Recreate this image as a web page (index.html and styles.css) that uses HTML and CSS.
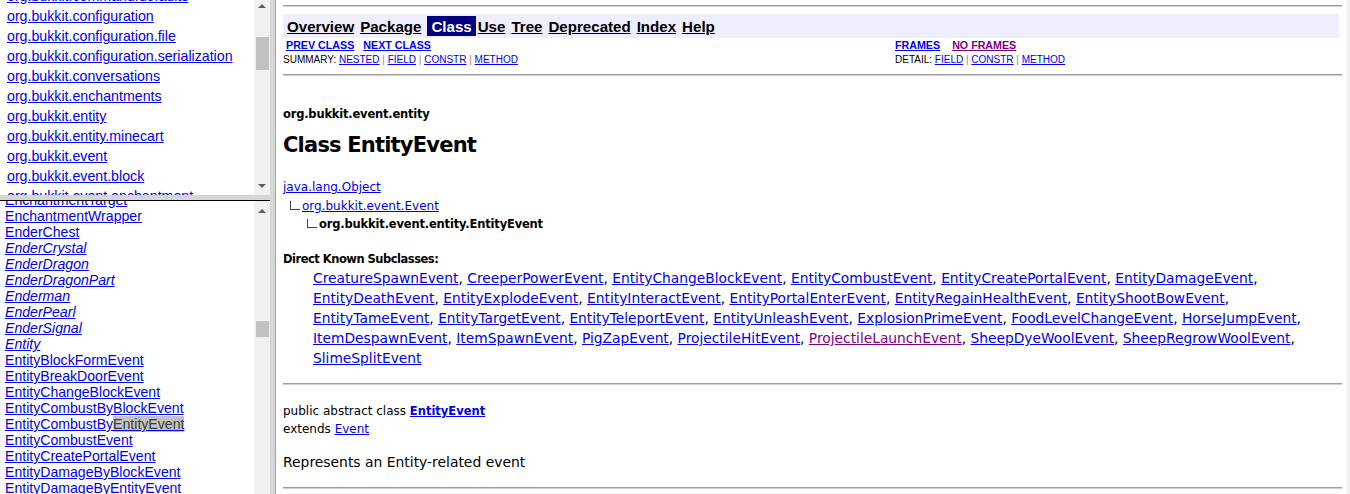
FILE: index.html
```html
<!DOCTYPE html>
<html>
<head>
<meta charset="utf-8">
<title>EntityEvent</title>
<link rel="stylesheet" href="styles.css">
</head>
<body>
<div class="screen">
  <div class="left">
    <div class="frame frame-top">
      <div class="frame-body">
        <ul class="pkg-list">
          <li><a href="#">org.bukkit.command.defaults</a></li>
          <li><a href="#">org.bukkit.configuration</a></li>
          <li><a href="#">org.bukkit.configuration.file</a></li>
          <li><a href="#">org.bukkit.configuration.serialization</a></li>
          <li><a href="#">org.bukkit.conversations</a></li>
          <li><a href="#">org.bukkit.enchantments</a></li>
          <li><a href="#">org.bukkit.entity</a></li>
          <li><a href="#">org.bukkit.entity.minecart</a></li>
          <li><a href="#">org.bukkit.event</a></li>
          <li><a href="#">org.bukkit.event.block</a></li>
          <li><a href="#">org.bukkit.event.enchantment</a></li>
        </ul>
      </div>
      <div class="vscroll vscroll-top">
        <div class="sb-btn sb-up"><span class="tri-up"></span></div>
        <div class="sb-thumb"></div>
        <div class="sb-btn sb-down"><span class="tri-down"></span></div>
      </div>
    </div>
    <div class="hsep"></div>
    <div class="frame frame-bottom">
      <div class="frame-body">
        <ul class="class-list">
          <li><a href="#">EnchantmentTarget</a></li>
          <li><a href="#">EnchantmentWrapper</a></li>
          <li><a href="#">EnderChest</a></li>
          <li><a href="#" class="iface">EnderCrystal</a></li>
          <li><a href="#" class="iface">EnderDragon</a></li>
          <li><a href="#" class="iface">EnderDragonPart</a></li>
          <li><a href="#" class="iface">Enderman</a></li>
          <li><a href="#" class="iface">EnderPearl</a></li>
          <li><a href="#" class="iface">EnderSignal</a></li>
          <li><a href="#" class="iface">Entity</a></li>
          <li><a href="#">EntityBlockFormEvent</a></li>
          <li><a href="#">EntityBreakDoorEvent</a></li>
          <li><a href="#">EntityChangeBlockEvent</a></li>
          <li><a href="#">EntityCombustByBlockEvent</a></li>
          <li><a href="#">EntityCombustBy<span class="hl">EntityEvent</span></a></li>
          <li><a href="#">EntityCombustEvent</a></li>
          <li><a href="#">EntityCreatePortalEvent</a></li>
          <li><a href="#">EntityDamageByBlockEvent</a></li>
          <li><a href="#">EntityDamageByEntityEvent</a></li>
          <li><a href="#">EntityDamageEvent</a></li>
        </ul>
      </div>
      <div class="vscroll vscroll-bottom">
        <div class="sb-btn sb-up2"><span class="tri-up"></span></div>
        <div class="sb-thumb sb-thumb2"></div>
      </div>
    </div>
  </div>
  <div class="vsep"></div>
  <div class="right">
    <div class="rule rule-1"></div>
    <div class="navbar">
      <a href="#" class="nav-link">Overview</a>
      <a href="#" class="nav-link">Package</a>
      <span class="nav-current">Class</span>
      <a href="#" class="nav-link">Use</a>
      <a href="#" class="nav-link">Tree</a>
      <a href="#" class="nav-link">Deprecated</a>
      <a href="#" class="nav-link">Index</a>
      <a href="#" class="nav-link">Help</a>
    </div>
    <div class="subnav">
      <div class="subnav-cell subnav-prevnext"><a href="#">PREV CLASS</a><a href="#" class="gap">NEXT CLASS</a></div>
      <div class="subnav-cell subnav-frames"><a href="#">FRAMES</a><a href="#" class="gap2 visited">NO FRAMES</a></div>
      <div class="subnav-cell subnav-small">SUMMARY:&nbsp;<a href="#">NESTED</a>&nbsp;<span class="pipe">|</span>&nbsp;<a href="#">FIELD</a>&nbsp;<span class="pipe">|</span>&nbsp;<a href="#">CONSTR</a>&nbsp;<span class="pipe">|</span>&nbsp;<a href="#">METHOD</a></div>
      <div class="subnav-cell subnav-small">DETAIL:&nbsp;<a href="#">FIELD</a>&nbsp;<span class="pipe">|</span>&nbsp;<a href="#">CONSTR</a>&nbsp;<span class="pipe">|</span>&nbsp;<a href="#">METHOD</a></div>
    </div>
    <div class="rule rule-2"></div>

    <div class="pkg-label">org.bukkit.event.entity</div>
    <h2 class="class-title">Class EntityEvent</h2>

    <div class="tree">
      <div class="tree-line"><a href="#">java.lang.Object</a></div>
      <div class="tree-line tree-l2"><span class="inherit"></span><a href="#">org.bukkit.event.Event</a></div>
      <div class="tree-line tree-l3"><span class="inherit"></span><b>org.bukkit.event.entity.EntityEvent</b></div>
    </div>

    <dl class="subclasses">
      <dt>Direct Known Subclasses:</dt>
      <dd><a href="#">CreatureSpawnEvent</a>, <a href="#">CreeperPowerEvent</a>, <a href="#">EntityChangeBlockEvent</a>, <a href="#">EntityCombustEvent</a>, <a href="#">EntityCreatePortalEvent</a>, <a href="#">EntityDamageEvent</a>, <a href="#">EntityDeathEvent</a>, <a href="#">EntityExplodeEvent</a>, <a href="#">EntityInteractEvent</a>, <a href="#">EntityPortalEnterEvent</a>, <a href="#">EntityRegainHealthEvent</a>, <a href="#">EntityShootBowEvent</a>, <a href="#">EntityTameEvent</a>, <a href="#">EntityTargetEvent</a>, <a href="#">EntityTeleportEvent</a>, <a href="#">EntityUnleashEvent</a>, <a href="#">ExplosionPrimeEvent</a>, <a href="#">FoodLevelChangeEvent</a>, <a href="#">HorseJumpEvent</a>, <a href="#">ItemDespawnEvent</a>, <a href="#">ItemSpawnEvent</a>, <a href="#">PigZapEvent</a>, <a href="#">ProjectileHitEvent</a>, <a href="#" class="visited">ProjectileLaunchEvent</a>, <a href="#">SheepDyeWoolEvent</a>, <a href="#">SheepRegrowWoolEvent</a>, <a href="#">SlimeSplitEvent</a></dd>
    </dl>

    <div class="rule rule-3"></div>

    <div class="signature">
      <div>public abstract class <a href="#" class="strong-link">EntityEvent</a></div>
      <div>extends <a href="#">Event</a></div>
    </div>

    <p class="description">Represents an Entity-related event</p>

    <div class="rule rule-4"></div>
  </div>
  <div class="rscroll"></div>
</div>
</body>
</html>
```

FILE: styles.css
```css
html, body {
  margin: 0;
  padding: 0;
  background: #ffffff;
}

.screen {
  display: flex;
  width: 1350px;
  height: 494px;
  overflow: hidden;
  background: #ffffff;
}

a {
  color: #0000ee;
  text-decoration: underline;
}

a.visited {
  color: #800080;
}

/* ---------- left frames ---------- */
.left {
  width: 270px;
  flex: none;
  display: flex;
  flex-direction: column;
}

.frame {
  display: flex;
  overflow: hidden;
  background: #ffffff;
}

.frame-top {
  height: 195px;
  flex: none;
}

.frame-bottom {
  flex: 1;
}

.frame-body {
  flex: 1;
  overflow: hidden;
  font-family: "Liberation Sans", Arial, sans-serif;
  font-size: 14.2px;
}

.pkg-list,
.class-list {
  list-style: none;
  margin: 0;
  padding: 0;
  white-space: nowrap;
}

.pkg-list {
  margin-top: -14px;
  padding-left: 7px;
  line-height: 20px;
}

.class-list {
  margin-top: -9px;
  padding-left: 5px;
  line-height: 16px;
  font-size: 14.1px;
}

.iface {
  font-style: italic;
}

.hl {
  background: #c3c3c3;
  color: #3a3a3a;
}

.hsep {
  height: 5px;
  flex: none;
  background: #d6d6d6;
  border-bottom: 1px solid #000000;
}

.vsep {
  width: 5px;
  flex: none;
  background: #d6d6d6;
  border-right: 1px solid #a0a0a0;
}

/* scrollbars */
.vscroll {
  width: 16px;
  flex: none;
  background: #f0f0f0;
  display: flex;
  flex-direction: column;
}

.sb-btn {
  display: flex;
  align-items: center;
  justify-content: center;
  flex: none;
}

.sb-up {
  height: 12px;
}

.sb-up2 {
  height: 19px;
}

.sb-down {
  height: 19px;
  margin-top: auto;
}

.tri-up {
  width: 0;
  height: 0;
  border-left: 4px solid transparent;
  border-right: 4px solid transparent;
  border-bottom: 4px solid #606060;
}

.tri-down {
  width: 0;
  height: 0;
  border-left: 4px solid transparent;
  border-right: 4px solid transparent;
  border-top: 4px solid #606060;
}

.sb-thumb {
  flex: none;
  margin-top: 25px;
  margin-left: 2px;
  width: 13px;
  height: 33px;
  background: #c1c1c1;
}

.sb-thumb2 {
  margin-top: 101px;
  height: 16px;
}

.rscroll {
  width: 3px;
  flex: none;
  background: #f0f0f0;
}

/* ---------- right frame ---------- */
.right {
  flex: 1;
  min-width: 0;
  padding: 0 5px 0 7px;
  font-family: "DejaVu Sans", sans-serif;
  color: #000000;
}

.rule {
  height: 0;
  border-top: 1px solid #9c9c9c;
  border-bottom: 1px solid #cfcfcf;
}

.rule-1 { margin-top: 5px; }
.rule-2 { margin-top: 7px; }
.rule-3 { margin-top: 15px; }
.rule-4 { margin-top: 16px; }

.navbar {
  margin-top: 7px;
  margin-right: 3px;
  background: #eeeeff;
  padding: 2px 0 2px 4px;
  display: flex;
  align-items: center;
  font-family: "Liberation Sans", Arial, sans-serif;
  font-weight: bold;
  font-size: 15.1px;
  line-height: 20px;
}

.nav-link {
  color: #000000;
  margin-right: 6px;
  padding-top: 2px;
  line-height: 18px;
}

.nav-current {
  background: #000080;
  color: #ffffff;
  padding: 2px 4px 0;
  margin-right: 2px;
  height: 18px;
  line-height: 18px;
}

.subnav {
  display: grid;
  grid-template-columns: 612px 1fr;
  font-family: "Liberation Sans", Arial, sans-serif;
  white-space: nowrap;
}

.subnav-cell {
  line-height: 14px;
}

.subnav-prevnext,
.subnav-frames {
  font-size: 10.7px;
  font-weight: bold;
}

.subnav-prevnext {
  padding-left: 3px;
}

.gap {
  margin-left: 9px;
}

.gap2 {
  margin-left: 12px;
}

.subnav-small {
  font-size: 10px;
  margin-top: 1px;
}

.pipe {
  color: #a8844c;
}

.pkg-label {
  margin-top: 31px;
  font-weight: bold;
  font-size: 11.5px;
  line-height: 14px;
  letter-spacing: -0.2px;
}

.class-title {
  margin: 12px 0 0;
  font-size: 21px;
  line-height: 24px;
  font-weight: bold;
  letter-spacing: -0.8px;
}

.tree {
  margin-top: 21px;
  font-size: 12px;
  line-height: 18.5px;
  white-space: nowrap;
}

.tree b {
  font-size: 11.5px;
  letter-spacing: -0.17px;
}

.tree-l2 {
  padding-left: 7px;
}

.tree-l3 {
  padding-left: 24px;
}

.inherit {
  display: inline-block;
  width: 9px;
  height: 8px;
  border-left: 1px solid #444444;
  border-bottom: 1px solid #444444;
  margin-right: 2px;
  vertical-align: 0;
}

.subclasses {
  margin: 18px 0 0;
}

.subclasses dt {
  font-weight: bold;
  font-size: 11.5px;
  line-height: 14px;
  letter-spacing: -0.5px;
}

.subclasses dd {
  margin: 2.5px 0 0 30px;
  font-size: 13.8px;
  line-height: 20px;
}

.signature {
  margin-top: 17px;
  font-size: 12px;
  line-height: 18px;
}

.strong-link {
  font-weight: bold;
  font-size: 11.5px;
}

.description {
  margin: 15px 0 0;
  font-size: 13.9px;
  line-height: 18px;
}
```
